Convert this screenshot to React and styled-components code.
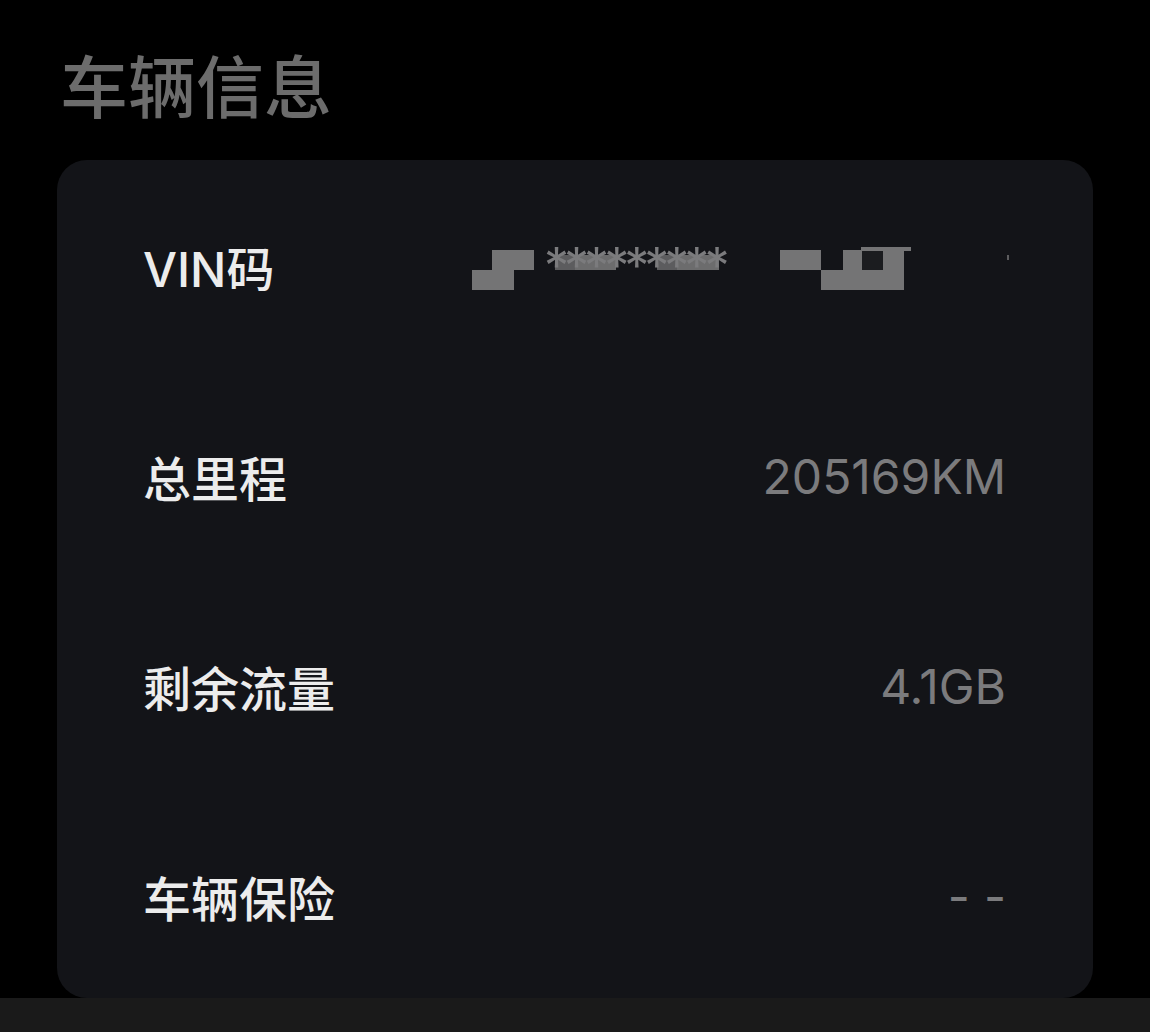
import React from "react";
import styled, { createGlobalStyle } from "styled-components";

const Global = createGlobalStyle`
  html, body { margin: 0; padding: 0; background: #000; }
  body { font-family: Inter, "Noto Sans CJK SC", sans-serif; }
`;

const Page = styled.div`
  width: 1150px;
  height: 1032px;
  background: #000;
  display: flex;
  flex-direction: column;
  overflow: hidden;
`;

const Title = styled.h1`
  margin: 0;
  padding: 43px 0 35px 60px;
  font-family: "Noto Sans CJK SC", sans-serif;
  font-size: 68px;
  line-height: 82px;
  font-weight: 500;
  color: #6c6c6c;
`;

const Card = styled.section`
  margin: 0 57px;
  height: 838px;
  flex-shrink: 0;
  box-sizing: border-box;
  background: #131418;
  border-radius: 30px;
  padding: 6px 87px 0 86px;
  display: flex;
  flex-direction: column;
  gap: 10px;
`;

const Row = styled.div`
  height: 200px;
  display: flex;
  align-items: center;
  justify-content: space-between;
`;

const Label = styled.span`
  font-family: Inter, "Noto Sans CJK SC", sans-serif;
  font-size: 48px;
  font-weight: 500;
  color: #ececec;
`;

const Value = styled.span`
  font-family: Inter, "Noto Sans CJK SC", sans-serif;
  font-size: 48px;
  font-weight: 400;
  color: #7b7b7d;
`;

const Dash = styled.span`
  font-family: Inter, sans-serif;
  font-size: 48px;
  color: #7b7b7d;
  letter-spacing: 14px;
  margin-right: -14px;
`;

const Mosaic = styled.div`
  position: relative;
  width: 540px;
  height: 48px;
  margin-right: -6px;
`;

const MosaicArt = styled.svg`
  position: absolute;
  left: 0;
  top: 0;
`;

const Stars = styled.span`
  position: relative;
  display: block;
  padding-left: 72px;
  font-family: Inter, sans-serif;
  font-size: 50px;
  line-height: 48px;
  color: #7b7b7d;
  letter-spacing: -5px;
  transform: translateY(0px);
`;

const Bottom = styled.div`
  height: 34px;
  background: #1a1a1a;
  margin-top: auto;
`;

const G = "#747475";

function VinMosaic() {
  return (
    <Mosaic>
      <MosaicArt width="540" height="48" viewBox="0 0 540 48">
        <rect x="0" y="28" width="42" height="20" fill={G} />
        <rect x="20" y="8" width="42" height="20" fill={G} />
        <rect x="83" y="13" width="20" height="15" fill="#5c5c5e" />
        <rect x="103" y="13" width="41" height="15" fill="#6c6c6d" />
        <rect x="185" y="13" width="20" height="15" fill="#5c5c5e" />
        <rect x="205" y="13" width="42" height="15" fill="#6c6c6d" />
        <rect x="308" y="8" width="41" height="20" fill={G} />
        <rect x="349" y="28" width="83" height="20" fill={G} />
        <rect x="371" y="8" width="19" height="20" fill={G} />
        <rect x="390" y="8" width="21" height="20" fill="#1b1c1f" />
        <rect x="411" y="9" width="21" height="19" fill={G} />
        <rect x="389" y="5" width="50" height="4" fill={G} />
        <rect x="535" y="13" width="2" height="5" fill="#5c5c5e" />
      </MosaicArt>
      <Stars>*********</Stars>
    </Mosaic>
  );
}

export default function App() {
  return (
    <Page>
      <Global />
      <Title>车辆信息</Title>
      <Card>
        <Row>
          <Label>VIN码</Label>
          <VinMosaic />
        </Row>
        <Row>
          <Label>总里程</Label>
          <Value>205169KM</Value>
        </Row>
        <Row>
          <Label>剩余流量</Label>
          <Value>4.1GB</Value>
        </Row>
        <Row>
          <Label>车辆保险</Label>
          <Dash>--</Dash>
        </Row>
      </Card>
      <Bottom />
    </Page>
  );
}
